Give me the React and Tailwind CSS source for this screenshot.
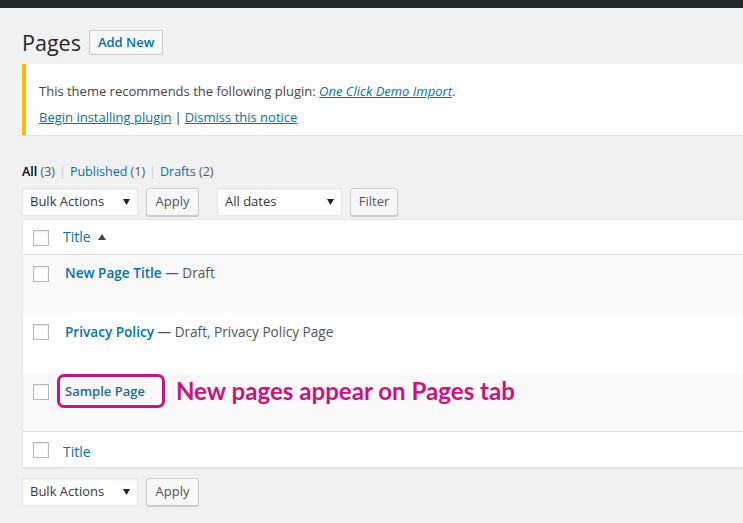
import React from "react";

const font = { fontFamily: '"Open Sans", "Noto Sans", Arial, sans-serif' };

function Arrow() {
  return (
    <svg width="7" height="6" viewBox="0 0 7 6" className="shrink-0">
      <path d="M0 0 L7 0 L3.5 6 Z" fill="#222" />
    </svg>
  );
}

function Select({ label, w }) {
  return (
    <div
      className={`flex items-center justify-between h-[28px] bg-white border border-[#e5e5e5] shadow-[inset_0_1px_2px_rgba(0,0,0,0.07)] pl-[7px] pr-[7px] text-[13px] text-[#32373c] ${w}`}
    >
      <span>{label}</span>
      <Arrow />
    </div>
  );
}

function Btn({ label, w }) {
  return (
    <div
      className={`flex items-center justify-center h-[28px] bg-[#f7f7f7] border border-[#cccccc] rounded-[3px] shadow-[0_1px_0_#cccccc] text-[13px] text-[#555] ${w}`}
    >
      {label}
    </div>
  );
}

function Check() {
  return (
    <div className="w-[16px] h-[16px] bg-white border border-[#b4b9be] shadow-[inset_0_1px_2px_rgba(0,0,0,0.1)] shrink-0" />
  );
}

export default function App() {
  return (
    <div className="w-[743px] h-[523px] overflow-hidden bg-[#f1f1f1]" style={font}>
      <div className="h-[8px] bg-[#23282d]" />
      <div className="pl-[22px]">
        {/* heading */}
        <div className="flex items-center mt-[22px] h-[25px]">
          <h1 className="text-[21.5px] leading-[25px] text-[#23282d] font-normal">Pages</h1>
          <div className="ml-[8px] h-[25px] px-[8px] flex items-center border border-[#cccccc] bg-[#f7f7f7] rounded-[2px] text-[13px] font-semibold text-[#0073aa]">
            Add New
          </div>
        </div>

        {/* notice */}
        <div className="mt-[9px] bg-white border-l-[4px] border-[#ffb900] shadow-[0_1px_1px_rgba(0,0,0,0.06)] pl-[13px] pt-[17px] pb-[8px] text-[13px] leading-[20px] text-[#444]">
          <p>
            This theme recommends the following plugin:{" "}
            <a className="italic underline text-[#0073aa]">One Click Demo Import</a>.
          </p>
          <p className="mt-[6px]">
            <a className="underline text-[#0073aa]">Begin installing plugin</a>
            <span className="text-[#444] mx-[3px]">|</span>
            <a className="underline text-[#0073aa]">Dismiss this notice</a>
          </p>
        </div>

        {/* subsubsub */}
        <div className="mt-[27px] text-[12.5px] leading-[20px] text-[#666]">
          <span className="text-black font-semibold">All</span> <span className="text-[#555]">(3)</span>
          <span className="text-[#ccc] mx-[4px]">|</span>
          <span className="text-[#0073aa]">Published</span> <span className="text-[#555]">(1)</span>
          <span className="text-[#ccc] mx-[4px]">|</span>
          <span className="text-[#0073aa]">Drafts</span> <span className="text-[#555]">(2)</span>
        </div>

        {/* tablenav top */}
        <div className="mt-[6px] flex items-center">
          <Select label="Bulk Actions" w="w-[116px]" />
          <div className="ml-[8px]"><Btn label="Apply" w="w-[53px]" /></div>
          <div className="ml-[18px]"><Select label="All dates" w="w-[125px]" /></div>
          <div className="ml-[8px]"><Btn label="Filter" w="w-[48px]" /></div>
        </div>

        {/* table */}
        <div className="mt-[3px] bg-white border border-[#e5e5e5] border-r-0 shadow-[0_1px_1px_rgba(0,0,0,0.04)]">
          {/* header */}
          <div className="h-[35px] flex items-start border-b border-[#e1e1e1]">
            <div className="ml-[10px] mt-[10px]"><Check /></div>
            <div className="ml-[14px] mt-[7px] flex items-center text-[14px] leading-[20px] text-[#0073aa]">
              Title
              <svg width="8" height="6" viewBox="0 0 8 6" className="ml-[7px]">
                <path d="M0 6 L8 6 L4 0 Z" fill="#444" />
              </svg>
            </div>
          </div>

          {/* row 1 */}
          <div className="h-[58px] flex items-start bg-[#f9f9f9]">
            <div className="ml-[10px] mt-[11px]"><Check /></div>
            <div className="ml-[16px] mt-[8px] text-[13.6px] leading-[20px] text-[#555]">
              <span className="font-semibold text-[#0073aa]">New Page Title</span> — Draft
            </div>
          </div>

          {/* row 2 */}
          <div className="h-[60px] flex items-start bg-white">
            <div className="ml-[10px] mt-[11px]"><Check /></div>
            <div className="ml-[16px] mt-[9px] text-[13.6px] leading-[20px] text-[#555]">
              <span className="font-semibold text-[#0073aa]">Privacy Policy</span> — Draft, Privacy Policy Page
            </div>
          </div>

          {/* row 3 */}
          <div className="h-[59px] flex items-start bg-[#f9f9f9] border-b border-[#e1e1e1]">
            <div className="ml-[10px] mt-[11px]"><Check /></div>
            <div className="ml-[8px] mt-[1px] flex items-center">
              <div className="border-[3px] border-[#cc1480] rounded-[7px] pl-[5px] pr-[17px] py-[4px] text-[13px] leading-[20px] font-semibold text-[#1e6b8e]">
                Sample Page
              </div>
              <span
                className="ml-[11px] text-[24.1px] font-bold text-[#cc1480] leading-[28px]"
                style={{ fontFamily: 'Lato, "Open Sans", sans-serif' }}
              >
                New pages appear on Pages tab
              </span>
            </div>
          </div>

          {/* footer */}
          <div className="h-[35px] flex items-start">
            <div className="ml-[10px] mt-[10px]"><Check /></div>
            <div className="ml-[14px] mt-[10px] text-[14px] leading-[20px] text-[#0073aa]">Title</div>
          </div>
        </div>

        {/* tablenav bottom */}
        <div className="mt-[10px] flex items-center">
          <Select label="Bulk Actions" w="w-[116px]" />
          <div className="ml-[8px]"><Btn label="Apply" w="w-[53px]" /></div>
        </div>
      </div>
    </div>
  );
}
